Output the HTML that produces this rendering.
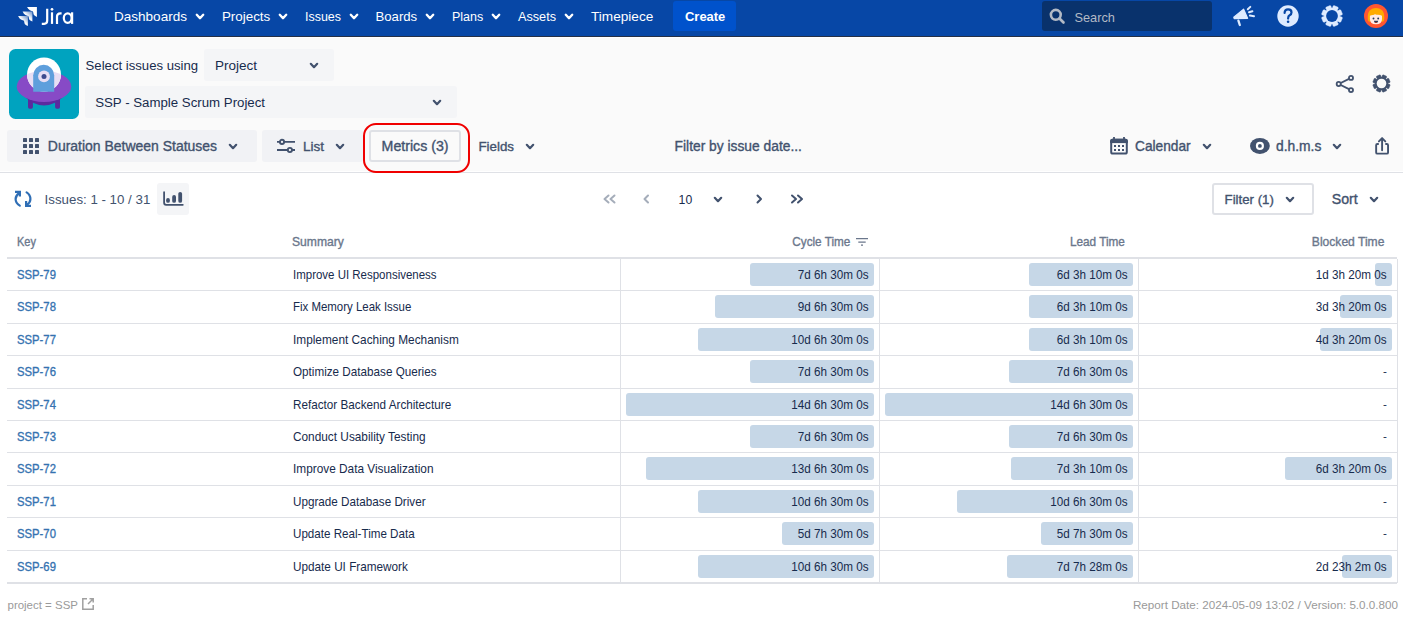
<!DOCTYPE html>
<html><head><meta charset="utf-8"><style>
html,body{margin:0;padding:0;}
body{width:1403px;height:621px;overflow:hidden;position:relative;background:#fafafa;font-family:"Liberation Sans",sans-serif;}
.t{position:absolute;white-space:nowrap;line-height:1;}
.r{position:absolute;}
</style></head><body>
<div class="r" style="left:0px;top:0px;width:1403px;height:36px;background:#0747a6"></div>
<div class="r" style="left:0px;top:36px;width:1403px;height:1px;background:#253045"></div>
<div class="r" style="left:0px;top:37px;width:1403px;height:1px;background:#ffffff"></div>
<svg class="r" style="left:15px;top:4px" width="25" height="25" viewBox="0 0 25 25">
<defs><linearGradient id="jg" x1="0.9" y1="0.1" x2="0.3" y2="0.75"><stop offset="0" stop-color="#fff" stop-opacity="0.5"/><stop offset="0.55" stop-color="#fff" stop-opacity="0.95"/><stop offset="1" stop-color="#fff"/></linearGradient></defs>
<path transform="translate(12.1 3)" d="M0 0 H9.8 V9.9 Q8 9 6.8 8.1 Q6.2 7 6.1 5.3 Q5.8 4.2 4.6 4.1 Q2.6 3.6 1.3 2.1 Q0.5 1 0 0Z" fill="#fff"/>
<path transform="translate(7.6 7.6)" d="M0 0 H9.8 V9.9 Q8 9 6.8 8.1 Q6.2 7 6.1 5.3 Q5.8 4.2 4.6 4.1 Q2.6 3.6 1.3 2.1 Q0.5 1 0 0Z" fill="url(#jg)"/>
<path transform="translate(3.1 12.1)" d="M0 0 H9.8 V9.9 Q8 9 6.8 8.1 Q6.2 7 6.1 5.3 Q5.8 4.2 4.6 4.1 Q2.6 3.6 1.3 2.1 Q0.5 1 0 0Z" fill="url(#jg)"/>
</svg>
<svg class="r" style="left:38px;top:4px" width="40" height="25" viewBox="0 0 40 25">
<g fill="none" stroke="#fff" stroke-width="2.2">
<path d="M9.2 4.8 V16.5 Q9.2 19.8 6.2 19.8 H3.8"/>
<path d="M14 8.3 V19.9"/>
<path d="M19 19.9 V12.6 Q19 9.5 22.5 9.4 H23.6"/>
<ellipse cx="29.7" cy="14.1" rx="3.9" ry="4.7"/>
<path d="M34.1 8.3 V19.9"/>
</g>
<circle cx="14" cy="5.3" r="1.35" fill="#fff"/>
</svg>
<div class="t" style="left:114.00px;top:9.00px;font-size:13.54px;color:#ffffff;line-height:15px;">Dashboards</div>
<svg class="r" style="left:194px;top:11.5px" width="12" height="9.0" viewBox="-2 -2 12 9.0"><path d="M0.8 0.8 L4.0 4.2 L7.2 0.8" fill="none" stroke="#ffffff" stroke-width="2.4" stroke-linecap="round" stroke-linejoin="round"/></svg>
<div class="t" style="left:221.90px;top:9.00px;font-size:13.40px;color:#ffffff;line-height:15px;">Projects</div>
<svg class="r" style="left:277px;top:11.5px" width="12" height="9.0" viewBox="-2 -2 12 9.0"><path d="M0.8 0.8 L4.0 4.2 L7.2 0.8" fill="none" stroke="#ffffff" stroke-width="2.4" stroke-linecap="round" stroke-linejoin="round"/></svg>
<div class="t" style="left:305.00px;top:10.00px;font-size:12.46px;color:#ffffff;line-height:14px;">Issues</div>
<svg class="r" style="left:348px;top:11.5px" width="12" height="9.0" viewBox="-2 -2 12 9.0"><path d="M0.8 0.8 L4.0 4.2 L7.2 0.8" fill="none" stroke="#ffffff" stroke-width="2.4" stroke-linecap="round" stroke-linejoin="round"/></svg>
<div class="t" style="left:375.50px;top:9.00px;font-size:13.16px;color:#ffffff;line-height:15px;">Boards</div>
<svg class="r" style="left:424px;top:11.5px" width="12" height="9.0" viewBox="-2 -2 12 9.0"><path d="M0.8 0.8 L4.0 4.2 L7.2 0.8" fill="none" stroke="#ffffff" stroke-width="2.4" stroke-linecap="round" stroke-linejoin="round"/></svg>
<div class="t" style="left:452.00px;top:10.00px;font-size:12.51px;color:#ffffff;line-height:14px;">Plans</div>
<svg class="r" style="left:490px;top:11.5px" width="12" height="9.0" viewBox="-2 -2 12 9.0"><path d="M0.8 0.8 L4.0 4.2 L7.2 0.8" fill="none" stroke="#ffffff" stroke-width="2.4" stroke-linecap="round" stroke-linejoin="round"/></svg>
<div class="t" style="left:518.00px;top:10.00px;font-size:12.66px;color:#ffffff;line-height:14px;">Assets</div>
<svg class="r" style="left:563px;top:11.5px" width="12" height="9.0" viewBox="-2 -2 12 9.0"><path d="M0.8 0.8 L4.0 4.2 L7.2 0.8" fill="none" stroke="#ffffff" stroke-width="2.4" stroke-linecap="round" stroke-linejoin="round"/></svg>
<div class="t" style="left:591.00px;top:9.00px;font-size:13.62px;color:#ffffff;line-height:15px;">Timepiece</div>
<div class="r" style="left:673px;top:1px;width:63px;height:30px;background:#0052cc;border-radius:3px"></div>
<div class="t" style="left:685.00px;top:9.00px;font-size:12.95px;font-weight:700;color:#ffffff;line-height:15px;">Create</div>
<div class="r" style="left:1042px;top:1px;width:170px;height:30px;background:#09326c;border-radius:3px"></div>
<svg class="r" style="left:1049px;top:8px" width="17" height="17" viewBox="0 0 17 17"><circle cx="6.8" cy="6.8" r="4.9" fill="none" stroke="#b3bac5" stroke-width="2.6"/><path d="M10.5 10.5 L14.5 14.5" stroke="#b3bac5" stroke-width="2.6" stroke-linecap="round"/></svg>
<div class="t" style="left:1074.50px;top:10.00px;font-size:12.78px;color:#b3bac5;line-height:15px;">Search</div>
<svg class="r" style="left:1230px;top:3px" width="28" height="26" viewBox="0 0 28 26">
<path d="M3.8 14.3 L13.6 6.2 L17.6 15.3 L4.2 15.6Z" fill="#deebff" stroke="#deebff" stroke-width="1.2" stroke-linejoin="round"/>
<path d="M8.4 17.6 L9.8 22" stroke="#deebff" stroke-width="2.3" stroke-linecap="round"/>
<path d="M17.8 6.3 L20.3 3.9 M19 9.3 L22.4 8.3 M19.9 12.6 L24 13.2" stroke="#deebff" stroke-width="2" stroke-linecap="round"/>
</svg>
<svg class="r" style="left:1274px;top:2px" width="28" height="28" viewBox="0 0 28 28">
<circle cx="14" cy="14" r="10.7" fill="#deebff"/>
<path d="M10.6 11 Q10.6 7.3 14.1 7.3 Q17.5 7.3 17.5 10.4 Q17.5 12.2 15.6 13.3 Q14.1 14.1 14.1 16.6" fill="none" stroke="#0747a6" stroke-width="2.2" stroke-linecap="round"/>
<circle cx="14.1" cy="19.8" r="1.3" fill="#0747a6"/>
</svg>
<svg class="r" style="left:1318.2px;top:1.9px" width="28" height="28" viewBox="0 0 28 28"><path d="M14.55 6.12 L15.01 4.19 L15.93 3.58 L20.01 5.27 L20.22 6.35 L19.18 8.04 L19.96 8.82 L21.65 7.78 L22.73 7.99 L24.42 12.07 L23.81 12.99 L21.88 13.45 L21.88 14.55 L23.81 15.01 L24.42 15.93 L22.73 20.01 L21.65 20.22 L19.96 19.18 L19.18 19.96 L20.22 21.65 L20.01 22.73 L15.93 24.42 L15.01 23.81 L14.55 21.88 L13.45 21.88 L12.99 23.81 L12.07 24.42 L7.99 22.73 L7.78 21.65 L8.82 19.96 L8.04 19.18 L6.35 20.22 L5.27 20.01 L3.58 15.93 L4.19 15.01 L6.12 14.55 L6.12 13.45 L4.19 12.99 L3.58 12.07 L5.27 7.99 L6.35 7.78 L8.04 8.82 L8.82 8.04 L7.78 6.35 L7.99 5.27 L12.07 3.58 L12.99 4.19 L13.45 6.12Z" fill="#deebff" stroke="#deebff" stroke-width="0.5" stroke-linejoin="round"/><circle cx="14.0" cy="14.0" r="5.9" fill="#0747a6"/></svg>
<svg class="r" style="left:1362px;top:2px" width="28" height="28" viewBox="0 0 28 28">
<circle cx="14" cy="14" r="12" fill="#ff5630"/>
<path d="M6 18.6 Q5 12.5 7.4 8.8 Q9.8 5.9 14 5.9 Q18.2 5.9 20.6 8.8 Q23 12.5 22 18.6 Q21.4 20.2 19.8 19.6 L8.2 19.6 Q6.6 20.2 6 18.6Z" fill="#ffab00"/>
<path d="M7.9 13.8 Q10 12.6 11.5 13 Q13 11.8 14.5 12.8 Q17.5 12.3 20 13.8 L20 17 Q20 22.3 14 22.3 Q7.9 22.3 7.9 17Z" fill="#ffebe6"/>
<circle cx="11.5" cy="16.5" r="0.95" fill="#253858"/><circle cx="16.2" cy="16.5" r="0.95" fill="#253858"/>
<path d="M11.9 18.7 H16.2 Q16 21 14 21 Q12 21 11.9 18.7Z" fill="#253858"/>
<path d="M12.8 20.3 Q14 19.4 15.3 20.3 Q14 21.2 12.8 20.3Z" fill="#de350b"/>
</svg>
<svg class="r" style="left:9px;top:49px" width="70" height="70" viewBox="0 0 70 70">
<defs><clipPath id="sauc"><ellipse cx="35" cy="37.4" rx="27.3" ry="15.5"/></clipPath></defs>
<rect x="0" y="0" width="70" height="70" rx="6.5" fill="#00a3bf"/>
<rect x="19" y="48" width="4.9" height="11.7" rx="1.6" fill="#5b2a9e"/>
<rect x="46.1" y="48" width="4.9" height="11.7" rx="1.6" fill="#5b2a9e"/>
<path d="M13 45 Q35 68 57 45Z" fill="#5c2b9f"/>
<ellipse cx="35" cy="37.4" rx="27.3" ry="15.5" fill="#874ac6"/>
<circle cx="35" cy="25.5" r="17" fill="#ffffff"/>
<circle cx="35" cy="25.5" r="17" fill="#e7def4" clip-path="url(#sauc)"/>
<path d="M24.2 42.8 L24.2 26.3 A10.5 10.5 0 0 1 45.2 26.3 L45.2 42.8Z" fill="#5e9fdc"/>
<circle cx="35" cy="27.4" r="5.9" fill="#e7def4"/>
<circle cx="35" cy="27.4" r="2.5" fill="#3e4b8e"/>
</svg>
<div class="t" style="left:85.60px;top:58.00px;font-size:13.15px;color:#172b4d;line-height:15px;">Select issues using</div>
<div class="r" style="left:204px;top:49px;width:130px;height:32px;background:#f4f5f7;border-radius:3px"></div>
<div class="t" style="left:215.00px;top:58.00px;font-size:13.50px;color:#172b4d;line-height:15px;">Project</div>
<svg class="r" style="left:308px;top:61px" width="12" height="9" viewBox="-2 -2 12 9"><path d="M0.8 0.8 L4.0 4.2 L7.2 0.8" fill="none" stroke="#42526e" stroke-width="2.2" stroke-linecap="round" stroke-linejoin="round"/></svg>
<div class="r" style="left:85px;top:86px;width:372px;height:32px;background:#f4f5f7;border-radius:3px"></div>
<div class="t" style="left:95.20px;top:95.00px;font-size:13.26px;color:#172b4d;line-height:15px;">SSP - Sample Scrum Project</div>
<svg class="r" style="left:431px;top:98px" width="12" height="9" viewBox="-2 -2 12 9"><path d="M0.8 0.8 L4.0 4.2 L7.2 0.8" fill="none" stroke="#42526e" stroke-width="2.2" stroke-linecap="round" stroke-linejoin="round"/></svg>
<svg class="r" style="left:1333px;top:72px" width="24" height="24" viewBox="0 0 24 24">
<path d="M5.7 12 L18 5.9 M5.7 12 L18 18.1" stroke="#42526e" stroke-width="1.9"/>
<circle cx="5.7" cy="12" r="2.05" fill="#fafafa" stroke="#42526e" stroke-width="1.8"/>
<circle cx="18" cy="5.9" r="2.05" fill="#fafafa" stroke="#42526e" stroke-width="1.8"/>
<circle cx="18" cy="18.1" r="2.05" fill="#fafafa" stroke="#42526e" stroke-width="1.8"/>
</svg>
<svg class="r" style="left:1370px;top:72px" width="23" height="23" viewBox="0 0 23 23"><path d="M11.95 5.02 L12.34 3.36 L13.10 2.85 L16.49 4.25 L16.66 5.15 L15.76 6.59 L16.41 7.24 L17.85 6.34 L18.75 6.51 L20.15 9.90 L19.64 10.66 L17.98 11.05 L17.98 11.95 L19.64 12.34 L20.15 13.10 L18.75 16.49 L17.85 16.66 L16.41 15.76 L15.76 16.41 L16.66 17.85 L16.49 18.75 L13.10 20.15 L12.34 19.64 L11.95 17.98 L11.05 17.98 L10.66 19.64 L9.90 20.15 L6.51 18.75 L6.34 17.85 L7.24 16.41 L6.59 15.76 L5.15 16.66 L4.25 16.49 L2.85 13.10 L3.36 12.34 L5.02 11.95 L5.02 11.05 L3.36 10.66 L2.85 9.90 L4.25 6.51 L5.15 6.34 L6.59 7.24 L7.24 6.59 L6.34 5.15 L6.51 4.25 L9.90 2.85 L10.66 3.36 L11.05 5.02Z" fill="#42526e" stroke="#42526e" stroke-width="0.5" stroke-linejoin="round"/><circle cx="11.5" cy="11.5" r="4.8" fill="#fafafa"/></svg>
<div class="r" style="left:7px;top:130px;width:250px;height:32px;background:#f1f2f5;border-radius:3px"></div>
<svg class="r" style="left:23px;top:138px" width="16" height="16" viewBox="0 0 16 16"><rect x="0" y="0" width="4" height="4" rx="0.6" fill="#42526e"/><rect x="6" y="0" width="4" height="4" rx="0.6" fill="#42526e"/><rect x="12" y="0" width="4" height="4" rx="0.6" fill="#42526e"/><rect x="0" y="6" width="4" height="4" rx="0.6" fill="#42526e"/><rect x="6" y="6" width="4" height="4" rx="0.6" fill="#42526e"/><rect x="12" y="6" width="4" height="4" rx="0.6" fill="#42526e"/><rect x="0" y="12" width="4" height="4" rx="0.6" fill="#42526e"/><rect x="6" y="12" width="4" height="4" rx="0.6" fill="#42526e"/><rect x="12" y="12" width="4" height="4" rx="0.6" fill="#42526e"/></svg>
<div class="t" style="left:47.80px;top:138.00px;font-size:13.98px;-webkit-text-stroke:0.35px #42526e;color:#42526e;line-height:16px;">Duration Between Statuses</div>
<svg class="r" style="left:227px;top:142px" width="12" height="9" viewBox="-2 -2 12 9"><path d="M0.8 0.8 L4.0 4.2 L7.2 0.8" fill="none" stroke="#42526e" stroke-width="2.2" stroke-linecap="round" stroke-linejoin="round"/></svg>
<div class="r" style="left:262px;top:130px;width:101px;height:32px;background:#f1f2f5;border-radius:3px"></div>
<svg class="r" style="left:276px;top:138px" width="20" height="16" viewBox="0 0 20 16">
<path d="M1 3.9 H19 M1 12 H19" stroke="#42526e" stroke-width="1.9"/>
<circle cx="6" cy="3.9" r="2.1" fill="#f1f2f5" stroke="#42526e" stroke-width="1.9"/>
<circle cx="13.9" cy="12" r="2.1" fill="#f1f2f5" stroke="#42526e" stroke-width="1.9"/>
</svg>
<div class="t" style="left:303.00px;top:139.00px;font-size:13.50px;-webkit-text-stroke:0.35px #42526e;color:#42526e;line-height:15px;">List</div>
<svg class="r" style="left:334px;top:142px" width="12" height="9" viewBox="-2 -2 12 9"><path d="M0.8 0.8 L4.0 4.2 L7.2 0.8" fill="none" stroke="#42526e" stroke-width="2.2" stroke-linecap="round" stroke-linejoin="round"/></svg>
<div class="r" style="left:369px;top:130px;width:92px;height:32px;background:#fafafa;border:2px solid #dfe1e6;border-radius:3px;box-sizing:border-box"></div>
<div class="t" style="left:381.60px;top:138.00px;font-size:14.19px;-webkit-text-stroke:0.35px #42526e;color:#42526e;line-height:16px;">Metrics (3)</div>
<div class="t" style="left:478.40px;top:139.00px;font-size:13.35px;-webkit-text-stroke:0.35px #42526e;color:#42526e;line-height:15px;">Fields</div>
<svg class="r" style="left:524px;top:142px" width="12" height="9" viewBox="-2 -2 12 9"><path d="M0.8 0.8 L4.0 4.2 L7.2 0.8" fill="none" stroke="#42526e" stroke-width="2.2" stroke-linecap="round" stroke-linejoin="round"/></svg>
<div class="t" style="left:674.60px;top:139.00px;font-size:13.81px;-webkit-text-stroke:0.35px #42526e;color:#42526e;line-height:15px;">Filter by issue date...</div>
<svg class="r" style="left:1105px;top:132px" width="30" height="28" viewBox="0 0 30 28">
<rect x="6.2" y="7.8" width="15.6" height="13.7" rx="1.6" fill="none" stroke="#42526e" stroke-width="2"/>
<rect x="5.2" y="6.8" width="17.6" height="4.3" rx="2" fill="#42526e"/>
<rect x="5.2" y="9" width="17.6" height="2.1" fill="#42526e"/>
<rect x="8.1" y="5" width="1.8" height="2.6" fill="#42526e"/><rect x="18.1" y="5" width="1.8" height="2.6" fill="#42526e"/>
<g fill="#42526e"><rect x="9" y="13" width="2" height="2"/><rect x="13" y="13" width="2" height="2"/><rect x="17" y="13" width="2" height="2"/>
<rect x="9" y="17" width="2" height="2"/><rect x="13" y="17" width="2" height="2"/><rect x="17" y="17" width="2" height="2"/></g>
</svg>
<div class="t" style="left:1135.00px;top:139.00px;font-size:13.73px;-webkit-text-stroke:0.35px #42526e;color:#42526e;line-height:15px;">Calendar</div>
<svg class="r" style="left:1201px;top:142px" width="12" height="9" viewBox="-2 -2 12 9"><path d="M0.8 0.8 L4.0 4.2 L7.2 0.8" fill="none" stroke="#42526e" stroke-width="2.2" stroke-linecap="round" stroke-linejoin="round"/></svg>
<svg class="r" style="left:1245px;top:132px" width="30" height="28" viewBox="0 0 30 28">
<ellipse cx="14.9" cy="13.9" rx="9.9" ry="8" fill="#42526e"/>
<circle cx="14.9" cy="13.9" r="4.05" fill="#ffffff"/><circle cx="14.9" cy="13.9" r="1.9" fill="#42526e"/>
</svg>
<div class="t" style="left:1276.00px;top:138.00px;font-size:13.85px;-webkit-text-stroke:0.35px #42526e;color:#42526e;line-height:16px;">d.h.m.s</div>
<svg class="r" style="left:1331px;top:142px" width="12" height="9" viewBox="-2 -2 12 9"><path d="M0.8 0.8 L4.0 4.2 L7.2 0.8" fill="none" stroke="#42526e" stroke-width="2.2" stroke-linecap="round" stroke-linejoin="round"/></svg>
<svg class="r" style="left:1368px;top:132px" width="30" height="28" viewBox="0 0 30 28">
<path d="M10.8 11.95 H9.4 Q8.15 11.95 8.15 13.2 V20.4 Q8.15 21.65 9.4 21.65 H18.8 Q20.05 21.65 20.05 20.4 V13.2 Q20.05 11.95 18.8 11.95 H17.3" fill="none" stroke="#42526e" stroke-width="1.9"/>
<path d="M14.1 18.3 V6.5 M10.9 9.4 L14.1 6.1 L17.3 9.4" fill="none" stroke="#42526e" stroke-width="1.9" stroke-linecap="round" stroke-linejoin="round"/>
</svg>
<div class="r" style="left:0px;top:171px;width:1403px;height:1px;background:#ffffff"></div>
<div class="r" style="left:0px;top:172px;width:1403px;height:1px;background:#dfe1e6"></div>
<div class="r" style="left:0px;top:173px;width:1403px;height:448px;background:#ffffff"></div>
<div class="r" style="left:363px;top:122.6px;width:107.39999999999998px;height:50.0px;border:2.3px solid #f00000;border-radius:13px;box-sizing:border-box"></div>
<svg class="r" style="left:10px;top:186px" width="26" height="26" viewBox="0 0 26 26">
<path d="M9.3 7 Q5.6 9.5 5.6 13 Q5.6 17.3 9.8 19.6" fill="none" stroke="#2f6eb5" stroke-width="2.2" stroke-linecap="round"/>
<path d="M16.6 6.4 Q20.4 8.7 20.4 13 Q20.4 16.5 16.9 18.8" fill="none" stroke="#2f6eb5" stroke-width="2.2" stroke-linecap="round"/>
<path d="M5 5.9 H9.9 V10.6" fill="none" stroke="#2f6eb5" stroke-width="2.2"/>
<path d="M16.1 15.1 V19.9 H21" fill="none" stroke="#2f6eb5" stroke-width="2.2"/>
</svg>
<div class="t" style="left:44.60px;top:192.00px;font-size:13.31px;color:#42526e;line-height:15px;">Issues: 1 - 10 / 31</div>
<div class="r" style="left:157px;top:183px;width:32px;height:32px;background:#f4f5f7;border-radius:3px"></div>
<svg class="r" style="left:157px;top:183px" width="32" height="32" viewBox="0 0 32 32">
<path d="M7.1 9.2 V19.8 Q7.1 21.8 9.1 21.8 H25.8" fill="none" stroke="#42526e" stroke-width="1.8" stroke-linecap="round"/>
<rect x="9.1" y="15" width="3.8" height="4.8" rx="1.9" fill="#42526e"/>
<rect x="15.2" y="12" width="3.8" height="7.8" rx="1.9" fill="#42526e"/>
<rect x="21.3" y="8.9" width="3.8" height="10.9" rx="1.9" fill="#42526e"/>
</svg>
<svg class="r" style="left:602px;top:193px" width="16" height="12" viewBox="0 0 16 12"><path d="M6.5 2.5 L2.5 6 L6.5 9.5 M12.5 2.5 L8.5 6 L12.5 9.5" fill="none" stroke="#a5adba" stroke-width="2" stroke-linecap="round" stroke-linejoin="round"/></svg>
<svg class="r" style="left:642px;top:193px" width="10" height="12" viewBox="0 0 10 12"><path d="M6 2.5 L2.5 6 L6 9.5" fill="none" stroke="#a5adba" stroke-width="2" stroke-linecap="round" stroke-linejoin="round"/></svg>
<div class="t" style="left:678.60px;top:193.00px;font-size:12.23px;color:#172b4d;line-height:14px;">10</div>
<svg class="r" style="left:712px;top:195px" width="12" height="9" viewBox="-2 -2 12 9"><path d="M0.8 0.8 L4.0 4.2 L7.2 0.8" fill="none" stroke="#42526e" stroke-width="2.2" stroke-linecap="round" stroke-linejoin="round"/></svg>
<svg class="r" style="left:754px;top:193px" width="10" height="12" viewBox="0 0 10 12"><path d="M3.5 2.5 L7 6 L3.5 9.5" fill="none" stroke="#42526e" stroke-width="2" stroke-linecap="round" stroke-linejoin="round"/></svg>
<svg class="r" style="left:789px;top:193px" width="16" height="12" viewBox="0 0 16 12"><path d="M3 2.5 L7 6 L3 9.5 M9 2.5 L13 6 L9 9.5" fill="none" stroke="#42526e" stroke-width="2" stroke-linecap="round" stroke-linejoin="round"/></svg>
<div class="r" style="left:1212px;top:183px;width:102px;height:32px;background:#ffffff;border:2px solid #dfe1e6;border-radius:3px;box-sizing:border-box"></div>
<div class="t" style="left:1224.60px;top:192.00px;font-size:13.22px;-webkit-text-stroke:0.35px #42526e;color:#42526e;line-height:15px;">Filter (1)</div>
<svg class="r" style="left:1284px;top:195px" width="12" height="9" viewBox="-2 -2 12 9"><path d="M0.8 0.8 L4.0 4.2 L7.2 0.8" fill="none" stroke="#42526e" stroke-width="2.2" stroke-linecap="round" stroke-linejoin="round"/></svg>
<div class="t" style="left:1331.70px;top:191.00px;font-size:14.18px;-webkit-text-stroke:0.35px #42526e;color:#42526e;line-height:16px;">Sort</div>
<svg class="r" style="left:1368px;top:195px" width="12" height="9" viewBox="-2 -2 12 9"><path d="M0.8 0.8 L4.0 4.2 L7.2 0.8" fill="none" stroke="#42526e" stroke-width="2.2" stroke-linecap="round" stroke-linejoin="round"/></svg>
<div class="r" style="left:7px;top:222px;width:1390px;height:361px;background:#ffffff"></div>
<div class="t" style="left:17.40px;top:235.00px;font-size:12.40px;-webkit-text-stroke:0.35px #6b778c;color:#6b778c;line-height:14px;transform:scaleX(0.8892);transform-origin:left center;">Key</div>
<div class="t" style="left:292.20px;top:235.00px;font-size:12.40px;-webkit-text-stroke:0.35px #6b778c;color:#6b778c;line-height:14px;transform:scaleX(0.9783);transform-origin:left center;">Summary</div>
<div class="t" style="right:552.80px;top:235.00px;font-size:12.40px;-webkit-text-stroke:0.35px #6b778c;color:#6b778c;line-height:14px;transform:scaleX(0.9459);transform-origin:right center;">Cycle Time</div>
<svg class="r" style="left:856px;top:237px" width="12" height="10" viewBox="0 0 12 10"><path d="M0 1.6 H12 M2.3 5.1 H9.7 M5 8.2 H7" stroke="#6b778c" stroke-width="1.3"/></svg>
<div class="t" style="right:277.70px;top:235.00px;font-size:12.40px;-webkit-text-stroke:0.35px #6b778c;color:#6b778c;line-height:14px;transform:scaleX(0.9500);transform-origin:right center;">Lead Time</div>
<div class="t" style="right:18.60px;top:235.00px;font-size:12.40px;-webkit-text-stroke:0.35px #6b778c;color:#6b778c;line-height:14px;transform:scaleX(0.9755);transform-origin:right center;">Blocked Time</div>
<div class="r" style="left:7px;top:257px;width:1390px;height:2px;background:#dfe1e6"></div>
<div class="t" style="left:17.20px;top:267.00px;font-size:12.90px;-webkit-text-stroke:0.35px #3572b0;color:#3572b0;line-height:15px;transform:scaleX(0.8760);transform-origin:left center;">SSP-79</div>
<div class="t" style="left:292.50px;top:268.00px;font-size:12.20px;color:#172b4d;line-height:14px;transform:scaleX(0.9419);transform-origin:left center;">Improve UI Responsiveness</div>
<div class="r" style="left:750px;top:263px;width:124px;height:23px;background:#c6d7e7;border-radius:3px"></div>
<div class="t" style="right:534.00px;top:267.00px;font-size:12.80px;color:#172b4d;line-height:15px;transform:scaleX(0.9141);transform-origin:right center;">7d 6h 30m 0s</div>
<div class="r" style="left:1029px;top:263px;width:104px;height:23px;background:#c6d7e7;border-radius:3px"></div>
<div class="t" style="right:275.00px;top:267.00px;font-size:12.80px;color:#172b4d;line-height:15px;transform:scaleX(0.9141);transform-origin:right center;">6d 3h 10m 0s</div>
<div class="r" style="left:1375px;top:263px;width:17px;height:23px;background:#c6d7e7;border-radius:3px"></div>
<div class="t" style="right:16.00px;top:267.00px;font-size:12.80px;color:#172b4d;line-height:15px;transform:scaleX(0.9141);transform-origin:right center;">1d 3h 20m 0s</div>
<div class="r" style="left:7px;top:290px;width:1390px;height:1px;background:#dfe1e6"></div>
<div class="t" style="left:17.20px;top:299.00px;font-size:12.90px;-webkit-text-stroke:0.35px #3572b0;color:#3572b0;line-height:15px;transform:scaleX(0.8760);transform-origin:left center;">SSP-78</div>
<div class="t" style="left:292.50px;top:300.00px;font-size:12.20px;color:#172b4d;line-height:14px;transform:scaleX(0.9390);transform-origin:left center;">Fix Memory Leak Issue</div>
<div class="r" style="left:715px;top:295px;width:159px;height:23px;background:#c6d7e7;border-radius:3px"></div>
<div class="t" style="right:534.00px;top:299.00px;font-size:12.80px;color:#172b4d;line-height:15px;transform:scaleX(0.9141);transform-origin:right center;">9d 6h 30m 0s</div>
<div class="r" style="left:1029px;top:295px;width:104px;height:23px;background:#c6d7e7;border-radius:3px"></div>
<div class="t" style="right:275.00px;top:299.00px;font-size:12.80px;color:#172b4d;line-height:15px;transform:scaleX(0.9141);transform-origin:right center;">6d 3h 10m 0s</div>
<div class="r" style="left:1340px;top:295px;width:52px;height:23px;background:#c6d7e7;border-radius:3px"></div>
<div class="t" style="right:16.00px;top:299.00px;font-size:12.80px;color:#172b4d;line-height:15px;transform:scaleX(0.9141);transform-origin:right center;">3d 3h 20m 0s</div>
<div class="r" style="left:7px;top:323px;width:1390px;height:1px;background:#dfe1e6"></div>
<div class="t" style="left:17.20px;top:332.00px;font-size:12.90px;-webkit-text-stroke:0.35px #3572b0;color:#3572b0;line-height:15px;transform:scaleX(0.8760);transform-origin:left center;">SSP-77</div>
<div class="t" style="left:292.50px;top:333.00px;font-size:12.20px;color:#172b4d;line-height:14px;transform:scaleX(0.9710);transform-origin:left center;">Implement Caching Mechanism</div>
<div class="r" style="left:698px;top:328px;width:176px;height:23px;background:#c6d7e7;border-radius:3px"></div>
<div class="t" style="right:534.00px;top:332.00px;font-size:12.80px;color:#172b4d;line-height:15px;transform:scaleX(0.9141);transform-origin:right center;">10d 6h 30m 0s</div>
<div class="r" style="left:1029px;top:328px;width:104px;height:23px;background:#c6d7e7;border-radius:3px"></div>
<div class="t" style="right:275.00px;top:332.00px;font-size:12.80px;color:#172b4d;line-height:15px;transform:scaleX(0.9141);transform-origin:right center;">6d 3h 10m 0s</div>
<div class="r" style="left:1320px;top:328px;width:72px;height:23px;background:#c6d7e7;border-radius:3px"></div>
<div class="t" style="right:16.00px;top:332.00px;font-size:12.80px;color:#172b4d;line-height:15px;transform:scaleX(0.9141);transform-origin:right center;">4d 3h 20m 0s</div>
<div class="r" style="left:7px;top:355px;width:1390px;height:1px;background:#dfe1e6"></div>
<div class="t" style="left:17.20px;top:364.00px;font-size:12.90px;-webkit-text-stroke:0.35px #3572b0;color:#3572b0;line-height:15px;transform:scaleX(0.8760);transform-origin:left center;">SSP-76</div>
<div class="t" style="left:292.50px;top:365.00px;font-size:12.20px;color:#172b4d;line-height:14px;transform:scaleX(0.9590);transform-origin:left center;">Optimize Database Queries</div>
<div class="r" style="left:750px;top:360px;width:124px;height:23px;background:#c6d7e7;border-radius:3px"></div>
<div class="t" style="right:534.00px;top:364.00px;font-size:12.80px;color:#172b4d;line-height:15px;transform:scaleX(0.9141);transform-origin:right center;">7d 6h 30m 0s</div>
<div class="r" style="left:1009px;top:360px;width:124px;height:23px;background:#c6d7e7;border-radius:3px"></div>
<div class="t" style="right:275.00px;top:364.00px;font-size:12.80px;color:#172b4d;line-height:15px;transform:scaleX(0.9141);transform-origin:right center;">7d 6h 30m 0s</div>
<div class="t" style="right:16.00px;top:364.00px;font-size:11.70px;color:#172b4d;line-height:13px;">-</div>
<div class="r" style="left:7px;top:388px;width:1390px;height:1px;background:#dfe1e6"></div>
<div class="t" style="left:17.20px;top:397.00px;font-size:12.90px;-webkit-text-stroke:0.35px #3572b0;color:#3572b0;line-height:15px;transform:scaleX(0.8760);transform-origin:left center;">SSP-74</div>
<div class="t" style="left:292.50px;top:398.00px;font-size:12.20px;color:#172b4d;line-height:14px;transform:scaleX(0.9607);transform-origin:left center;">Refactor Backend Architecture</div>
<div class="r" style="left:626px;top:393px;width:248px;height:23px;background:#c6d7e7;border-radius:3px"></div>
<div class="t" style="right:534.00px;top:397.00px;font-size:12.80px;color:#172b4d;line-height:15px;transform:scaleX(0.9141);transform-origin:right center;">14d 6h 30m 0s</div>
<div class="r" style="left:885px;top:393px;width:248px;height:23px;background:#c6d7e7;border-radius:3px"></div>
<div class="t" style="right:275.00px;top:397.00px;font-size:12.80px;color:#172b4d;line-height:15px;transform:scaleX(0.9141);transform-origin:right center;">14d 6h 30m 0s</div>
<div class="t" style="right:16.00px;top:397.00px;font-size:11.70px;color:#172b4d;line-height:13px;">-</div>
<div class="r" style="left:7px;top:420px;width:1390px;height:1px;background:#dfe1e6"></div>
<div class="t" style="left:17.20px;top:429.00px;font-size:12.90px;-webkit-text-stroke:0.35px #3572b0;color:#3572b0;line-height:15px;transform:scaleX(0.8760);transform-origin:left center;">SSP-73</div>
<div class="t" style="left:292.50px;top:430.00px;font-size:12.20px;color:#172b4d;line-height:14px;transform:scaleX(0.9704);transform-origin:left center;">Conduct Usability Testing</div>
<div class="r" style="left:750px;top:425px;width:124px;height:23px;background:#c6d7e7;border-radius:3px"></div>
<div class="t" style="right:534.00px;top:429.00px;font-size:12.80px;color:#172b4d;line-height:15px;transform:scaleX(0.9141);transform-origin:right center;">7d 6h 30m 0s</div>
<div class="r" style="left:1009px;top:425px;width:124px;height:23px;background:#c6d7e7;border-radius:3px"></div>
<div class="t" style="right:275.00px;top:429.00px;font-size:12.80px;color:#172b4d;line-height:15px;transform:scaleX(0.9141);transform-origin:right center;">7d 6h 30m 0s</div>
<div class="t" style="right:16.00px;top:429.00px;font-size:11.70px;color:#172b4d;line-height:13px;">-</div>
<div class="r" style="left:7px;top:452px;width:1390px;height:1px;background:#dfe1e6"></div>
<div class="t" style="left:17.20px;top:461.00px;font-size:12.90px;-webkit-text-stroke:0.35px #3572b0;color:#3572b0;line-height:15px;transform:scaleX(0.8760);transform-origin:left center;">SSP-72</div>
<div class="t" style="left:292.50px;top:462.00px;font-size:12.20px;color:#172b4d;line-height:14px;transform:scaleX(0.9704);transform-origin:left center;">Improve Data Visualization</div>
<div class="r" style="left:646px;top:457px;width:228px;height:23px;background:#c6d7e7;border-radius:3px"></div>
<div class="t" style="right:534.00px;top:461.00px;font-size:12.80px;color:#172b4d;line-height:15px;transform:scaleX(0.9141);transform-origin:right center;">13d 6h 30m 0s</div>
<div class="r" style="left:1011px;top:457px;width:122px;height:23px;background:#c6d7e7;border-radius:3px"></div>
<div class="t" style="right:275.00px;top:461.00px;font-size:12.80px;color:#172b4d;line-height:15px;transform:scaleX(0.9141);transform-origin:right center;">7d 3h 10m 0s</div>
<div class="r" style="left:1285px;top:457px;width:107px;height:23px;background:#c6d7e7;border-radius:3px"></div>
<div class="t" style="right:16.00px;top:461.00px;font-size:12.80px;color:#172b4d;line-height:15px;transform:scaleX(0.9141);transform-origin:right center;">6d 3h 20m 0s</div>
<div class="r" style="left:7px;top:485px;width:1390px;height:1px;background:#dfe1e6"></div>
<div class="t" style="left:17.20px;top:494.00px;font-size:12.90px;-webkit-text-stroke:0.35px #3572b0;color:#3572b0;line-height:15px;transform:scaleX(0.8760);transform-origin:left center;">SSP-71</div>
<div class="t" style="left:292.50px;top:495.00px;font-size:12.20px;color:#172b4d;line-height:14px;transform:scaleX(0.9593);transform-origin:left center;">Upgrade Database Driver</div>
<div class="r" style="left:698px;top:490px;width:176px;height:23px;background:#c6d7e7;border-radius:3px"></div>
<div class="t" style="right:534.00px;top:494.00px;font-size:12.80px;color:#172b4d;line-height:15px;transform:scaleX(0.9141);transform-origin:right center;">10d 6h 30m 0s</div>
<div class="r" style="left:957px;top:490px;width:176px;height:23px;background:#c6d7e7;border-radius:3px"></div>
<div class="t" style="right:275.00px;top:494.00px;font-size:12.80px;color:#172b4d;line-height:15px;transform:scaleX(0.9141);transform-origin:right center;">10d 6h 30m 0s</div>
<div class="t" style="right:16.00px;top:494.00px;font-size:11.70px;color:#172b4d;line-height:13px;">-</div>
<div class="r" style="left:7px;top:517px;width:1390px;height:1px;background:#dfe1e6"></div>
<div class="t" style="left:17.20px;top:526.00px;font-size:12.90px;-webkit-text-stroke:0.35px #3572b0;color:#3572b0;line-height:15px;transform:scaleX(0.8760);transform-origin:left center;">SSP-70</div>
<div class="t" style="left:292.50px;top:527.00px;font-size:12.20px;color:#172b4d;line-height:14px;transform:scaleX(0.9538);transform-origin:left center;">Update Real-Time Data</div>
<div class="r" style="left:782px;top:522px;width:92px;height:23px;background:#c6d7e7;border-radius:3px"></div>
<div class="t" style="right:534.00px;top:526.00px;font-size:12.80px;color:#172b4d;line-height:15px;transform:scaleX(0.9141);transform-origin:right center;">5d 7h 30m 0s</div>
<div class="r" style="left:1041px;top:522px;width:92px;height:23px;background:#c6d7e7;border-radius:3px"></div>
<div class="t" style="right:275.00px;top:526.00px;font-size:12.80px;color:#172b4d;line-height:15px;transform:scaleX(0.9141);transform-origin:right center;">5d 7h 30m 0s</div>
<div class="t" style="right:16.00px;top:526.00px;font-size:11.70px;color:#172b4d;line-height:13px;">-</div>
<div class="r" style="left:7px;top:550px;width:1390px;height:1px;background:#dfe1e6"></div>
<div class="t" style="left:17.20px;top:559.00px;font-size:12.90px;-webkit-text-stroke:0.35px #3572b0;color:#3572b0;line-height:15px;transform:scaleX(0.8760);transform-origin:left center;">SSP-69</div>
<div class="t" style="left:292.50px;top:560.00px;font-size:12.20px;color:#172b4d;line-height:14px;transform:scaleX(0.9638);transform-origin:left center;">Update UI Framework</div>
<div class="r" style="left:698px;top:555px;width:176px;height:23px;background:#c6d7e7;border-radius:3px"></div>
<div class="t" style="right:534.00px;top:559.00px;font-size:12.80px;color:#172b4d;line-height:15px;transform:scaleX(0.9141);transform-origin:right center;">10d 6h 30m 0s</div>
<div class="r" style="left:1007px;top:555px;width:126px;height:23px;background:#c6d7e7;border-radius:3px"></div>
<div class="t" style="right:275.00px;top:559.00px;font-size:12.80px;color:#172b4d;line-height:15px;transform:scaleX(0.9141);transform-origin:right center;">7d 7h 28m 0s</div>
<div class="r" style="left:1342px;top:555px;width:50px;height:23px;background:#c6d7e7;border-radius:3px"></div>
<div class="t" style="right:16.00px;top:559.00px;font-size:12.80px;color:#172b4d;line-height:15px;transform:scaleX(0.9141);transform-origin:right center;">2d 23h 2m 0s</div>
<div class="r" style="left:7px;top:582px;width:1390px;height:2px;background:#dfe1e6"></div>
<div class="r" style="left:620px;top:259px;width:1px;height:324px;background:#dfe1e6"></div>
<div class="r" style="left:879px;top:259px;width:1px;height:324px;background:#dfe1e6"></div>
<div class="r" style="left:1138px;top:259px;width:1px;height:324px;background:#dfe1e6"></div>
<div class="r" style="left:1397px;top:259px;width:1px;height:324px;background:#dfe1e6"></div>
<div class="t" style="left:7.50px;top:599.00px;font-size:11.48px;color:#9a9a9a;line-height:12px;">project = SSP</div>
<svg class="r" style="left:81px;top:597px" width="14" height="14" viewBox="0 0 14 14"><path d="M6 1.8 H1.8 V12.2 H12.2 V8" fill="none" stroke="#a0a0a0" stroke-width="1.5"/><path d="M7 7 L12.2 1.8 M8.5 1.8 H12.2 V5.5" fill="none" stroke="#a0a0a0" stroke-width="1.5"/></svg>
<div class="t" style="right:5.00px;top:598.00px;font-size:11.66px;color:#9a9a9a;line-height:13px;">Report Date: 2024-05-09 13:02 / Version: 5.0.0.800</div>
</body></html>
